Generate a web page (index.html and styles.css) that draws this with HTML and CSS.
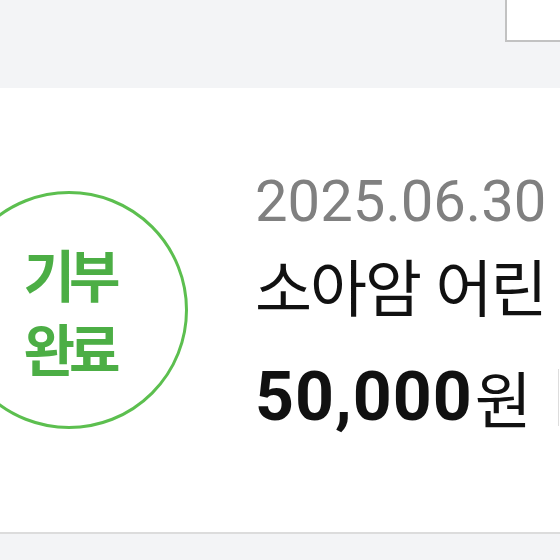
FILE: index.html
```html
<!DOCTYPE html>
<html lang="ko">
<head>
    <meta charset="UTF-8">
    <meta name="viewport" content="width=device-width, initial-scale=1.0">
    <title>기부 내역</title>
    <link rel="stylesheet" href="styles.css">
</head>
<body>
    <div class="topbar">
        <div class="topbar-box"></div>
    </div>

    <!-- donation card -->
    <div class="card">
        <div class="badge">
            <span>기부</span>
            <span>완료</span>
        </div>
        <div class="info">
            <div class="date">2025.06.30</div>
            <div class="title">소아암 어린</div>
            <div class="amount-row">
                <span class="amount">50,000</span><span class="won">원</span>
                <span class="divider"></span>
            </div>
        </div>
    </div>

    <div class="bottom"></div>
</body>
</html>
```

FILE: styles.css
```css
body {
    margin: 0;
    background-color: #f3f4f6;
    font-family: Roboto, "Noto Sans CJK KR", sans-serif;
    overflow: hidden;
}

.topbar {
    height: 88px;
    display: flex;
    justify-content: flex-end;
}

.topbar-box {
    width: 53px;
    height: 40px;
    background-color: #fff;
    border-left: 2px solid #c2c2c2;
    border-bottom: 2px solid #c2c2c2;
}

.card {
    height: 444px;
    background-color: #fff;
    border-bottom: 2px solid #dcdcdc;
    display: flex;
    align-items: center;
    overflow: hidden;
}

.badge {
    flex-shrink: 0;
    width: 232px;
    height: 232px;
    margin-left: -50px;
    border: 3px solid #5cbf4f;
    border-radius: 50%;
    display: flex;
    flex-direction: column;
    align-items: center;
    justify-content: center;
    color: #4cae45;
    font-family: "Noto Sans CJK KR", sans-serif;
    font-weight: 700;
    font-size: 56px;
    line-height: 74px;
    letter-spacing: -6px;
}

.info {
    margin-left: 67px;
    margin-bottom: 19px;
    white-space: nowrap;
    display: flex;
    flex-direction: column;
}

.date {
    font-size: 58px;
    line-height: 70px;
    color: #808080;
}

.title {
    margin-top: 10px;
    font-family: "Noto Sans CJK KR", sans-serif;
    font-size: 62px;
    line-height: 78px;
    letter-spacing: -2px;
    color: #111;
}

.amount-row {
    margin-top: 35px;
    display: flex;
    align-items: center;
}

.amount {
    font-size: 68px;
    line-height: 76px;
    font-weight: 700;
    letter-spacing: 1px;
    color: #111;
}

.won {
    margin-left: 2px;
    font-family: "Noto Sans CJK KR", sans-serif;
    font-size: 62px;
    line-height: 76px;
    color: #111;
}

.divider {
    margin-left: 26px;
    width: 0;
    height: 57px;
    border-left: 1px solid #dddddd;
}
```
